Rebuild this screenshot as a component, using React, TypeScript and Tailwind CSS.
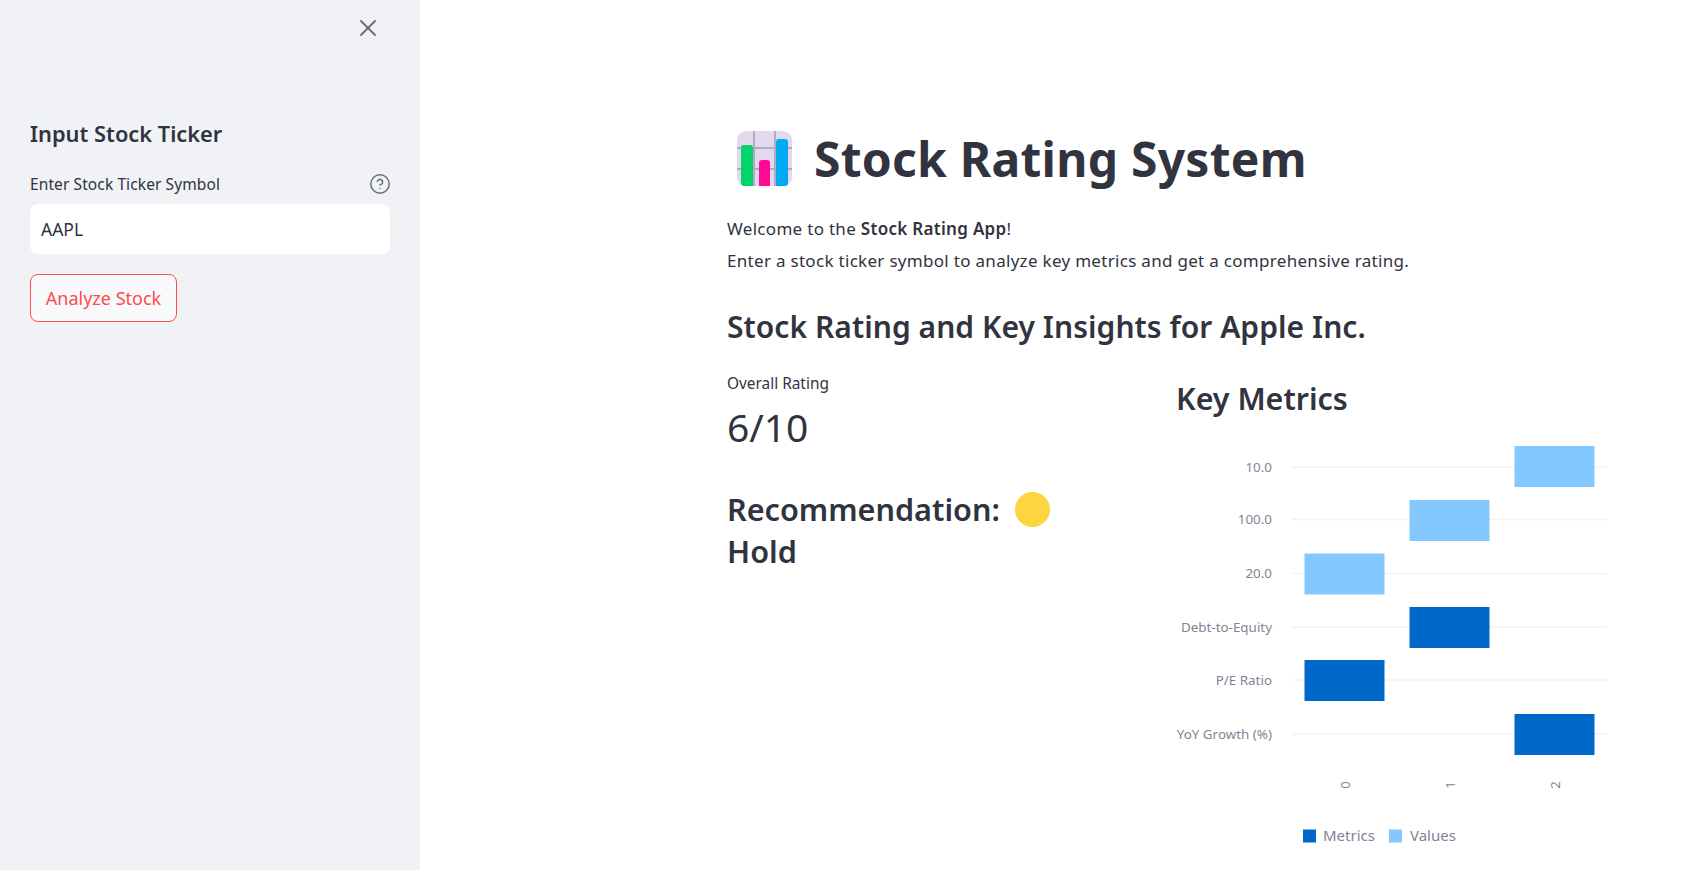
import { X, CircleHelp } from 'lucide-react';

const font = { fontFamily: '"Noto Sans", sans-serif' };

const gridRows = [
  { label: '10.0', y: 467 },
  { label: '100.0', y: 519.5 },
  { label: '20.0', y: 573.5 },
  { label: 'Debt-to-Equity', y: 627 },
  { label: 'P/E Ratio', y: 680 },
  { label: 'YoY Growth (%)', y: 734 },
];

const bars = [
  { x: 1514.5, y: 446, fill: '#83c9ff' },
  { x: 1409.5, y: 500, fill: '#83c9ff' },
  { x: 1304.5, y: 553.5, fill: '#83c9ff' },
  { x: 1409.5, y: 607, fill: '#0068c9' },
  { x: 1304.5, y: 660, fill: '#0068c9' },
  { x: 1514.5, y: 714, fill: '#0068c9' },
];

function ChartEmoji() {
  return (
    <svg width="55" height="56" viewBox="0 0 55 56" className="shrink-0">
      <rect x="0" y="0" width="55" height="55" rx="9" fill="#e1d9ec" />
      <path d="M17 0V55M38 0V55M0 17H55M0 38H55" stroke="#b3a9c0" strokeWidth="2" />
      <path d="M4 17a3 3 0 0 1 3-3h6a3 3 0 0 1 3 3V55H7a3 3 0 0 1-3-3Z" fill="#00d46a" />
      <path d="M22 32a3 3 0 0 1 3-3h5a3 3 0 0 1 3 3V55H22Z" fill="#ff0a93" />
      <path d="M39 11a3 3 0 0 1 3-3h6a3 3 0 0 1 3 3V52a3 3 0 0 1-3 3H39Z" fill="#00aaf2" />
    </svg>
  );
}

function MetricsChart() {
  return (
    <svg width="450" height="420" viewBox="1160 440 450 420" className="block overflow-visible" style={font}>
      {gridRows.map(row => (
        <g key={row.label}>
          <line x1="1292" x2="1607" y1={row.y} y2={row.y} stroke="#f0f2f6" strokeWidth="1.5" />
          <text x="1272" y={row.y + 4.5} textAnchor="end" fontSize="13.4" fill="#808495">
            {row.label}
          </text>
        </g>
      ))}
      {bars.map(bar => (
        <rect key={`${bar.x}-${bar.y}`} x={bar.x} y={bar.y} width="80" height="41" fill={bar.fill} />
      ))}
      {[
        { label: '0', x: 1350 },
        { label: '1', x: 1455 },
        { label: '2', x: 1560 },
      ].map(tick => (
        <text
          key={tick.label}
          x={tick.x}
          y="785"
          textAnchor="middle"
          fontSize="13"
          fill="#808495"
          transform={`rotate(-90 ${tick.x} 785)`}
        >
          {tick.label}
        </text>
      ))}
      <rect x="1303" y="829.5" width="13" height="13" fill="#0068c9" />
      <text x="1323" y="841" fontSize="15" fill="#808495">Metrics</text>
      <rect x="1389" y="829.5" width="13" height="13" fill="#83c9ff" />
      <text x="1410" y="841" fontSize="15" fill="#808495">Values</text>
    </svg>
  );
}

export default function App() {
  return (
    <div className="flex h-[870px] overflow-hidden bg-white text-[#31333f]" style={font}>
      <aside className="w-[420px] shrink-0 bg-[#f0f2f6] px-[30px]">
        <div className="flex justify-end pt-[14px]">
          <button className="mr-[8px] text-[#6b6f7c]">
            <X size={28} strokeWidth={1.7} />
          </button>
        </div>
        <h2 className="mt-[74px] text-[21.8px] leading-[36px] font-semibold">Input Stock Ticker</h2>
        <div className="mt-[21px] flex items-center justify-between">
          <span className="text-[15.5px] leading-5 tracking-[0.1px]">Enter Stock Ticker Symbol</span>
          <CircleHelp size={22} strokeWidth={1.6} className="text-[#6b6f7c] -mr-[1px]" />
        </div>
        <div className="mt-[9px] flex h-[50px] items-center rounded-lg bg-white px-[11px] text-[17.5px]">AAPL</div>
        <button className="mt-5 flex h-[48px] w-[147px] items-center justify-center rounded-lg border border-[#ff4b4b] bg-[#f8f9fb] text-[18px] text-[#ff4b4b]">
          Analyze Stock
        </button>
      </aside>

      <main className="min-w-0 flex-1 pl-[307px] pt-[131px]">
        <div className="flex items-center gap-[22px] pl-[10px]">
          <ChartEmoji />
          <h1 className="text-[48px] leading-[56px] font-bold tracking-[0.25px]">Stock Rating System</h1>
        </div>
        <div className="mt-[26px] text-[17px] leading-[32px] tracking-[0.3px]">
          <p>
            Welcome to the <strong className="font-semibold">Stock Rating App</strong>!
          </p>
          <p>Enter a stock ticker symbol to analyze key metrics and get a comprehensive rating.</p>
        </div>
        <h2 className="mt-[28px] text-[30px] leading-[44px] font-semibold tracking-[0.05px]">
          Stock Rating and Key Insights for Apple Inc.
        </h2>
        <div className="mt-[25px] flex">
          <div className="w-[449px] shrink-0">
            <div className="text-[15.4px] leading-5">Overall Rating</div>
            <div className="mt-[7px] text-[39px] leading-[52px] font-normal">6/10</div>
            <h3 className="mt-[35px] w-[340px] text-[30.6px] leading-[42px] font-semibold">
              Recommendation:{' '}
              <span className="ml-[7px] inline-block h-[35px] w-[35px] rounded-full bg-[#fdd53e] align-[-6px]" />
              <br />
              Hold
            </h3>
          </div>
          <div className="min-w-0">
            <h3 className="mt-[3px] text-[30.4px] leading-[44px] font-semibold">Key Metrics</h3>
            <div className="-ml-[16px] mt-[19px]">
              <MetricsChart />
            </div>
          </div>
        </div>
      </main>
    </div>
  );
}
